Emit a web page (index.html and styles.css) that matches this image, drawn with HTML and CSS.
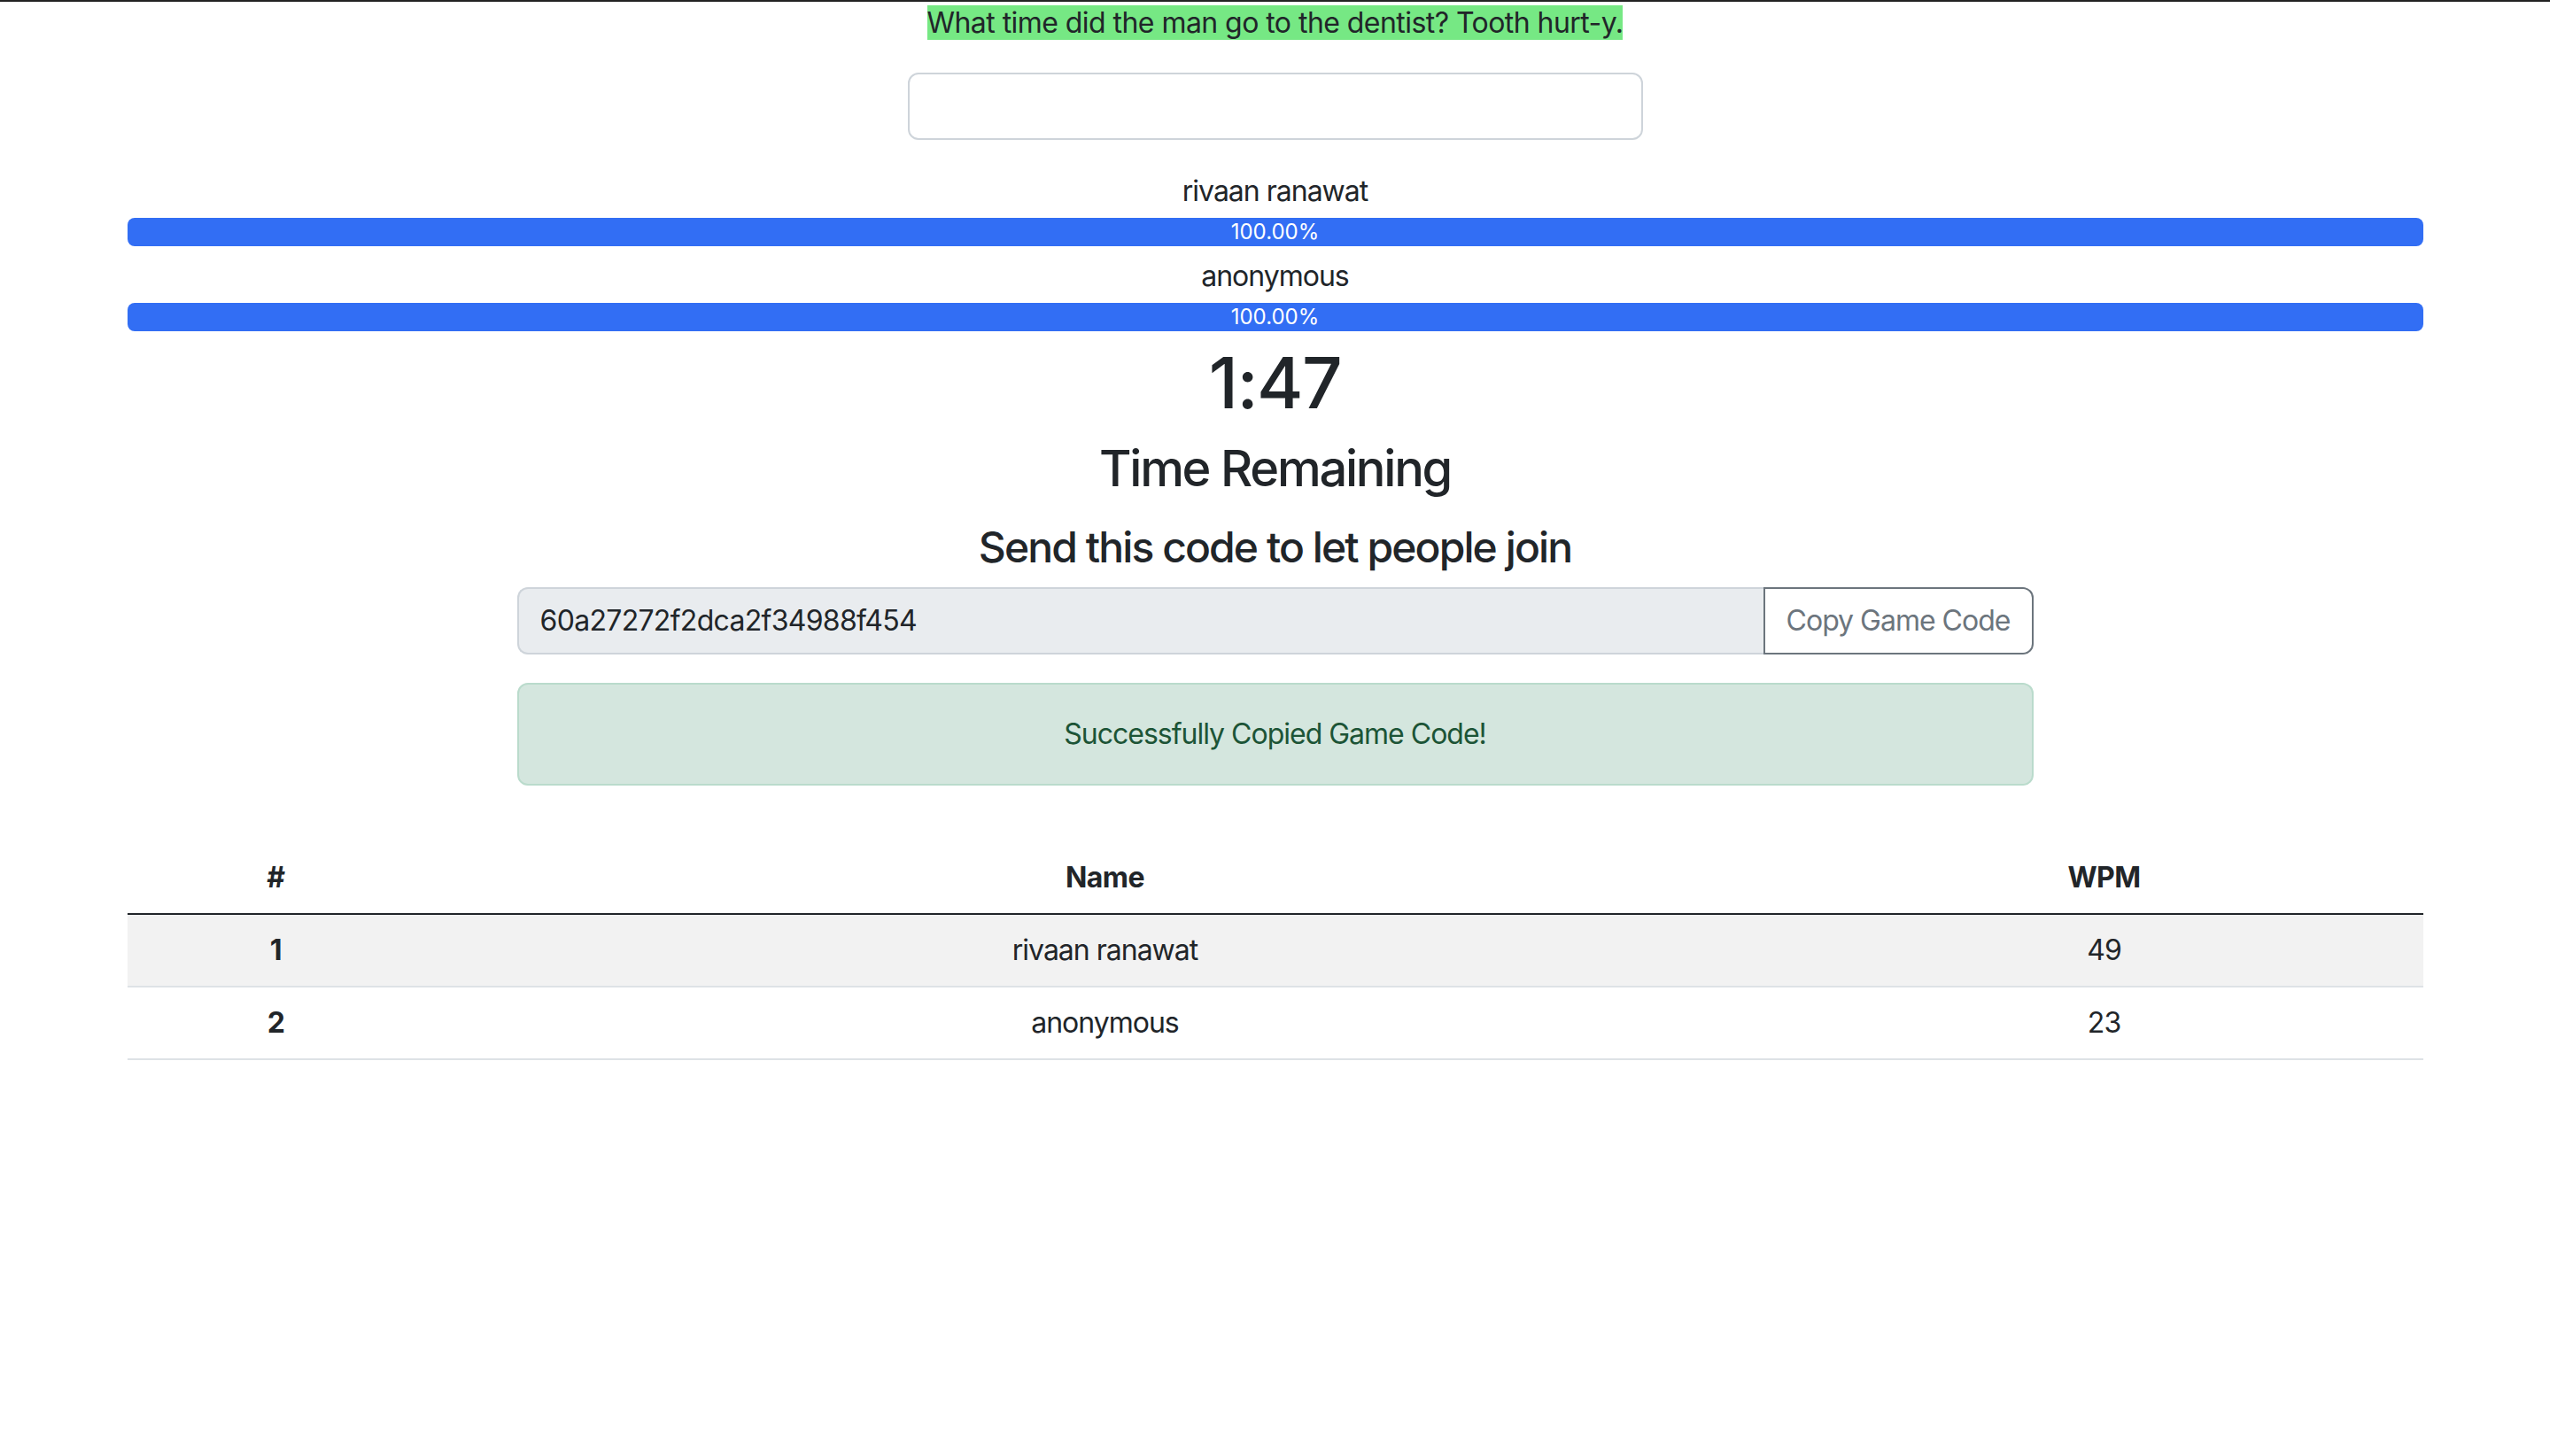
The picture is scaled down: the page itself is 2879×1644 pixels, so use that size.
FILE: index.html
```html
<!DOCTYPE html>
<html lang="en">
<head>
<meta charset="utf-8">
<title>Typing Race</title>
<link rel="stylesheet" href="styles.css">
</head>
<body>
<div class="container">
  <p class="quote"><span class="quote-text">What time did the man go to the dentist? Tooth hurt-y.</span></p>
  <input class="type-input" type="text">
  <div class="racers">
    <div class="racer">
      <div class="racer-name">rivaan ranawat</div>
      <div class="progress"><div class="progress-bar" style="width:100%">100.00%</div></div>
    </div>
    <div class="racer">
      <div class="racer-name">anonymous</div>
      <div class="progress"><div class="progress-bar" style="width:100%">100.00%</div></div>
    </div>
  </div>
  <h1 class="timer">1:47</h1>
  <h3 class="timer-label">Time Remaining</h3>
  <div class="share">
    <h4 class="share-title">Send this code to let people join</h4>
    <div class="input-group">
      <input class="code-input" type="text" value="60a27272f2dca2f34988f454" readonly>
      <button class="copy-btn" type="button">Copy Game Code</button>
    </div>
    <div class="alert">Successfully Copied Game Code!</div>
  </div>
  <table class="scores">
    <colgroup>
      <col class="col-rank">
      <col class="col-name">
      <col class="col-wpm">
    </colgroup>
    <thead>
      <tr><th>#</th><th>Name</th><th>WPM</th></tr>
    </thead>
    <tbody>
      <tr class="striped"><th>1</th><td>rivaan ranawat</td><td>49</td></tr>
      <tr><th>2</th><td>anonymous</td><td>23</td></tr>
    </tbody>
  </table>
</div>
</body>
</html>
```
FILE: styles.css
```css
html, body {
  margin: 0;
  padding: 0;
  background: #ffffff;
}

body {
  border-top: 2px solid #222222;
  font-family: Inter, "Noto Sans", "Liberation Sans", sans-serif;
  font-size: 32px;
  line-height: 1.5;
  letter-spacing: -1px;
  color: #212529;
}

.container {
  width: 2592px;
  margin: 0 auto;
  text-align: center;
}

.quote {
  margin: 0 0 32px;
  letter-spacing: -0.55px;
}

.quote-text {
  background: #76e884;
}

.type-input {
  display: block;
  box-sizing: border-box;
  width: 830px;
  height: 76px;
  margin: 0 auto;
  border: 2px solid #ced4da;
  border-radius: 12px;
  background: #ffffff;
  font: inherit;
}

.racers {
  margin-top: 34px;
}

.racer + .racer {
  margin-top: 10px;
}

.racer-name {
  line-height: 48px;
  margin-bottom: 6px;
}

.progress {
  display: flex;
  height: 32px;
  border-radius: 8px;
  background: #e9ecef;
  overflow: hidden;
}

.progress-bar {
  background: #326ef4;
  color: #ffffff;
  font-size: 24px;
  line-height: 32px;
  letter-spacing: 0;
  text-align: center;
}

.timer {
  margin: 10px 0 16px;
  font-size: 80px;
  font-weight: 500;
  line-height: 1.2;
  letter-spacing: -0.02em;
}

.timer-label {
  margin: 0 0 16px;
  font-size: 56px;
  font-weight: 500;
  line-height: 1.2;
  letter-spacing: -0.04em;
}

.share {
  width: 1712px;
  margin: 26px auto 0;
}

.share-title {
  margin: 0 0 16px;
  font-size: 48px;
  font-weight: 500;
  line-height: 1.2;
  letter-spacing: -0.04em;
}

.input-group {
  display: flex;
  margin-bottom: 32px;
}

.code-input {
  flex: 1;
  box-sizing: border-box;
  height: 76px;
  padding: 0 24px;
  border: 2px solid #ced4da;
  border-right: none;
  border-radius: 12px 0 0 12px;
  background: #e9ecef;
  color: #212529;
  font: inherit;
  letter-spacing: -0.7px;
  outline: none;
}

.copy-btn {
  box-sizing: border-box;
  width: 305px;
  height: 76px;
  border: 2px solid #6c757d;
  border-radius: 0 12px 12px 0;
  background: #ffffff;
  color: #6c757d;
  font: inherit;
  letter-spacing: -1px;
}

.alert {
  padding: 32px;
  border: 2px solid #badbcc;
  border-radius: 12px;
  background: #d4e6de;
  color: #1c5436;
  margin-bottom: 0;
}

.scores {
  width: 100%;
  margin-top: 64px;
  border-collapse: collapse;
}

.col-rank { width: 336px; }
.col-name { width: 1536px; }
.col-wpm { width: 720px; }

.scores th,
.scores td {
  padding: 16px;
  line-height: 48px;
  text-align: center;
  border-bottom: 2px solid #dee2e6;
}

.scores th {
  font-weight: 700;
  letter-spacing: -0.5px;
}

.scores thead th {
  border-bottom: 2px solid #212529;
}

.scores td {
  font-weight: 400;
}

.striped th,
.striped td {
  background: #f2f2f2;
}
```
